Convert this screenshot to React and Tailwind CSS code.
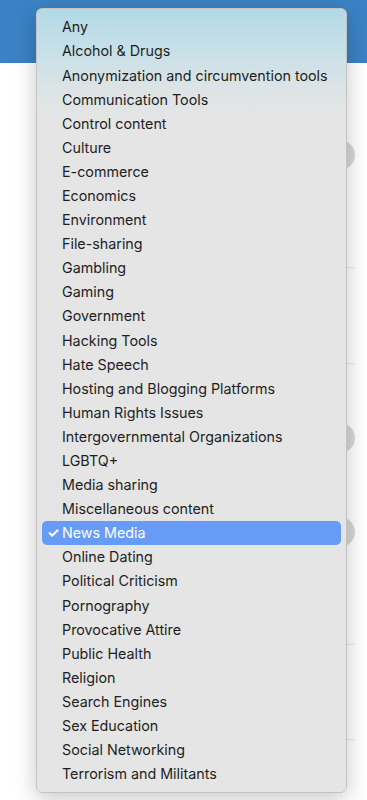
import React from "react";

const categories = [
  "Any",
  "Alcohol & Drugs",
  "Anonymization and circumvention tools",
  "Communication Tools",
  "Control content",
  "Culture",
  "E-commerce",
  "Economics",
  "Environment",
  "File-sharing",
  "Gambling",
  "Gaming",
  "Government",
  "Hacking Tools",
  "Hate Speech",
  "Hosting and Blogging Platforms",
  "Human Rights Issues",
  "Intergovernmental Organizations",
  "LGBTQ+",
  "Media sharing",
  "Miscellaneous content",
  "News Media",
  "Online Dating",
  "Political Criticism",
  "Pornography",
  "Provocative Attire",
  "Public Health",
  "Religion",
  "Search Engines",
  "Sex Education",
  "Social Networking",
  "Terrorism and Militants",
];

const selected = "News Media";

export default function App() {
  return (
    <div className="relative w-full h-[800px] overflow-hidden bg-white font-['Inter','Liberation_Sans',sans-serif]">
      {/* page behind the menu */}
      <div className="h-[63px] bg-[#3b82c4]" />
      <div className="flex flex-col pl-[60px] pr-3">
        <div className="h-[77px]" />
        <div className="flex justify-end h-[30px]">
          <div className="w-[30px] h-[30px] rounded-full bg-[#d8d8d8]" />
        </div>
        <div className="h-[97px]" />
        <div className="h-px bg-[#e8e8e8]" />
        <div className="h-[95px]" />
        <div className="h-px bg-[#e8e8e8]" />
        <div className="h-[59px]" />
        <div className="flex justify-end h-[30px]">
          <div className="w-[30px] h-[30px] rounded-full bg-[#d8d8d8]" />
        </div>
        <div className="h-[64px]" />
        <div className="flex justify-end h-[30px]">
          <div className="w-[30px] h-[30px] rounded-full bg-[#d8d8d8]" />
        </div>
        <div className="h-[97px]" />
        <div className="h-px bg-[#e8e8e8]" />
        <div className="h-[94px]" />
        <div className="h-px bg-[#e8e8e8]" />
      </div>

      {/* native select popup */}
      <div className="absolute left-[36px] top-[8px] w-[311px] rounded-[6px] border border-[#c4c4c4] bg-[linear-gradient(180deg,#b3d9e6_0px,#c6e0e8_40px,#dde4e6_80px,#e5e5e5_110px)] shadow-[0_6px_22px_rgba(0,0,0,0.22)] py-[6px] px-[5px]">
        {categories.map((c) => {
          const active = c === selected;
          return (
            <div
              key={c}
              className={
                active
                  ? "flex items-center h-[24.1px] rounded-[5px] bg-[#679cf6] text-white text-[14.3px]"
                  : "flex items-center h-[24.1px] text-[#1e1e1e] text-[14.3px]"
              }
            >
              <span className="w-[20px] pl-[5px] text-[14px] font-bold leading-none">{active ? "✓" : ""}</span>
              <span>{c}</span>
            </div>
          );
        })}
      </div>
    </div>
  );
}
